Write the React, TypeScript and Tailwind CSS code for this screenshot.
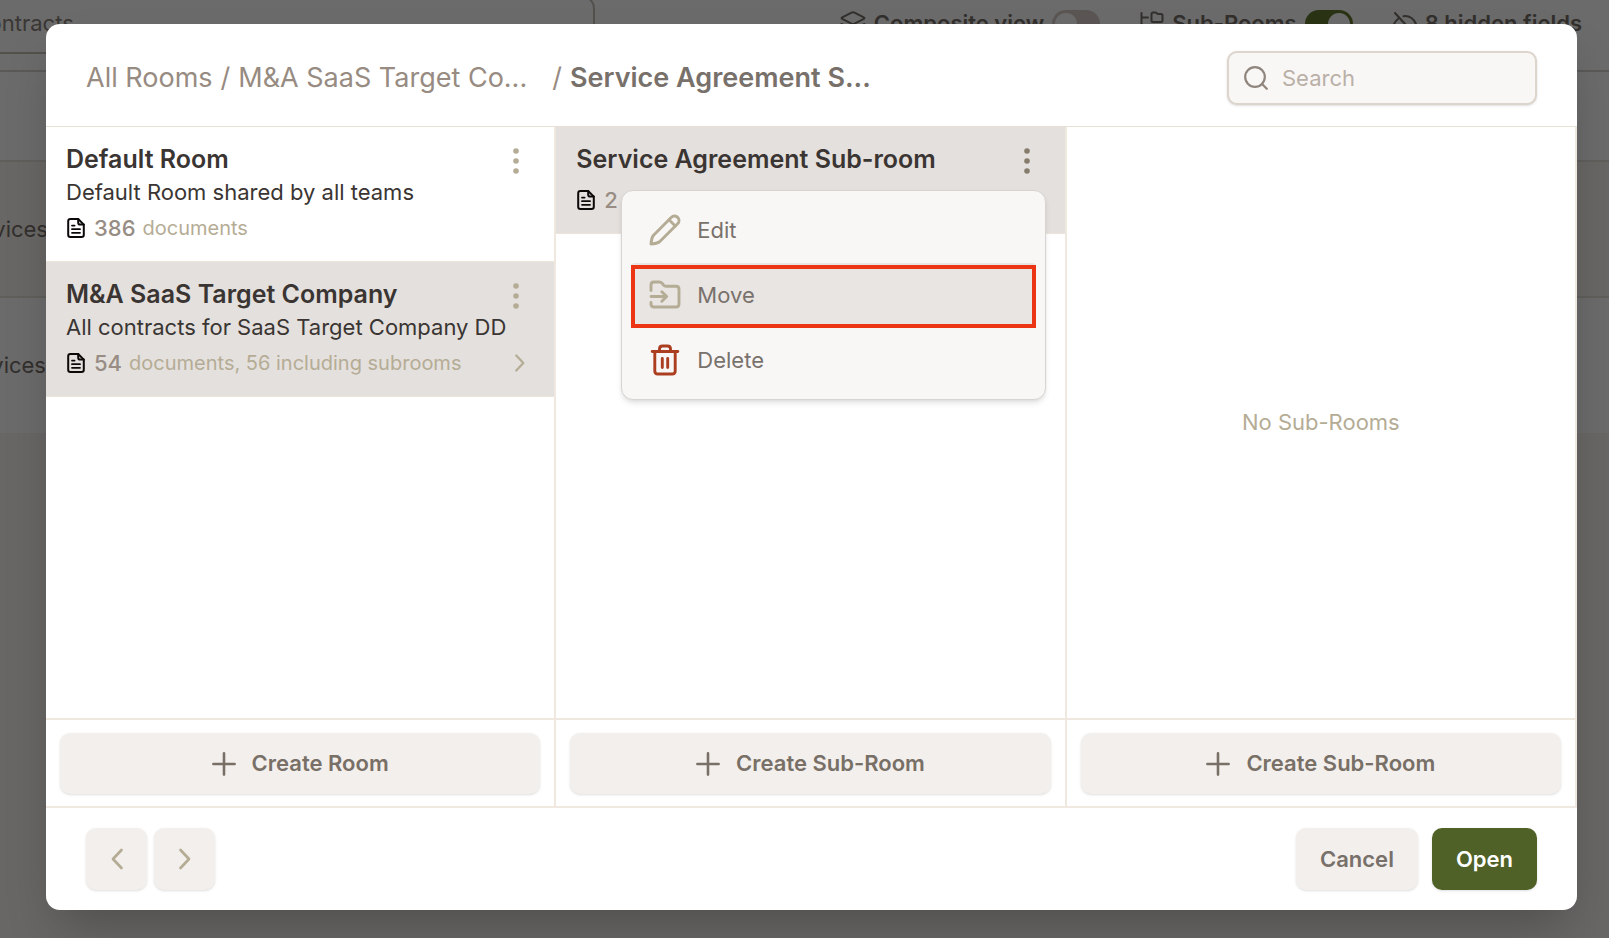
import type { ReactNode } from "react";

function DocumentIcon() {
  return (
    <svg viewBox="0 0 20 22" className="h-[22px] w-5 shrink-0" fill="none" stroke="#0c0a09" strokeWidth="2" strokeLinecap="round" strokeLinejoin="round" aria-hidden="true">
      <path d="M12.2 2H4.4C3 2 2.2 2.8 2.2 4.200v13.600C2.200 19.200 3 20 4.400 20h11.200c1.400 0 2.200-.8 2.200-2.200V7.600z" />
      <path d="M12.200 2v3.400c0 1.400.8 2.200 2.200 2.200h3.400" />
      <path d="M6 8.600h2.600M6 12.200h8M6 15.800h8" strokeWidth="1.800" />
    </svg>
  );
}

function KebabIcon() {
  return (
    <svg viewBox="0 0 6 26" className="h-[26px] w-1.5" fill="currentColor" aria-hidden="true">
      <circle cx="3" cy="3" r="2.800" />
      <circle cx="3" cy="13" r="2.800" />
      <circle cx="3" cy="23" r="2.800" />
    </svg>
  );
}

function Chevron({ left = false, small = false }: { left?: boolean; small?: boolean }) {
  return (
    <svg viewBox="0 0 14 24" className={small ? "h-5 w-3 shrink-0" : "h-6 w-3.5 shrink-0"} fill="none" stroke="#b5ac95" strokeWidth="2.700" strokeLinecap="round" strokeLinejoin="round" aria-hidden="true">
      <path d={left ? "M11.500 3 3 12l8.500 9" : "M2.500 3l8.500 9-8.500 9"} />
    </svg>
  );
}

function PencilIcon() {
  return (
    <svg viewBox="0 0 32 32" className="size-8" fill="none" stroke="#b5ac95" strokeWidth="2.900" strokeLinecap="round" strokeLinejoin="round" aria-hidden="true">
      <path d="M2 30c.2-3.400.9-6.600 2.300-8.600L22.200 3.400c4.300-4.300 10.700 2.100 6.400 6.400L10.600 27.700C8.600 29.100 5.400 29.800 2 30z" />
      <path d="M20 5.800l6.200 6.200" />
    </svg>
  );
}

function MoveIcon() {
  return (
    <svg viewBox="0 0 32 32" className="size-8" fill="none" stroke="#b5ac95" strokeWidth="2.900" strokeLinecap="round" strokeLinejoin="round" aria-hidden="true">
      <path d="M2 11.500V6c0-1.900 1.100-3 3-3h5.200c1.300 0 2.200.4 3 1.400l1.400 1.700c.7.900 1.500 1.200 2.600 1.200H27c1.900 0 3 1.100 3 3V25c0 1.900-1.100 3-3 3H5c-1.900 0-3-1.100-3-3v-1.500" />
      <path d="M2 17.500h15.500M12.800 12.700l4.900 4.800-4.900 4.800" />
    </svg>
  );
}

function TrashIcon() {
  return (
    <svg viewBox="0 0 32 32" className="size-8" fill="none" stroke="#ac3e20" strokeWidth="2.900" strokeLinecap="round" strokeLinejoin="round" aria-hidden="true">
      <path d="M3.200 7.500h25.600M5.800 7.500V27c0 1.900 1.100 3 3 3h14.400c1.900 0 3-1.100 3-3V7.500" />
      <path d="M10.500 7V5c0-1.900 1.100-3 3-3h5c1.900 0 3 1.100 3 3v2" />
      <path d="M13.300 14.500v9M18.700 14.500v9" />
    </svg>
  );
}

function PlusIcon() {
  return (
    <svg viewBox="0 0 24 24" className="size-6" fill="none" stroke="currentColor" strokeWidth="2.600" strokeLinecap="round" aria-hidden="true">
      <path d="M12 1.400v21.200M1.400 12h21.200" />
    </svg>
  );
}

function SearchIcon() {
  return (
    <svg viewBox="0 0 24 24" className="size-6 shrink-0" fill="none" stroke="#8f857c" strokeWidth="2.200" strokeLinecap="round" aria-hidden="true">
      <circle cx="11" cy="11" r="9.800" />
      <path d="M18 18l4.800 4.800" />
    </svg>
  );
}

function LayersIcon() {
  return (
    <svg viewBox="0 0 26 26" className="size-[26px]" fill="none" stroke="currentColor" strokeWidth="2" strokeLinecap="round" strokeLinejoin="round" aria-hidden="true">
      <path d="M11.500 1.600 2.200 6.400c-.8.400-.8 1 0 1.400l9.300 4.800c1 .5 2 .5 3 0l9.300-4.800c.8-.4.8-1 0-1.400l-9.300-4.800c-1-.5-2-.5-3 0z" />
      <path d="M1.500 13l10 5.200c1 .5 2 .5 3 0l10-5.200M1.500 18.500l10 5.200c1 .5 2 .5 3 0l10-5.200" />
    </svg>
  );
}

function TreeIcon() {
  return (
    <svg viewBox="0 0 24 26" className="h-[26px] w-6" fill="none" stroke="currentColor" strokeWidth="2" strokeLinecap="round" strokeLinejoin="round" aria-hidden="true">
      <path d="M1.500 2v17c0 1.500.8 2 2 2H8M1.500 6.500H8" />
      <path d="M11.500 3c0-1 .5-1.500 1.500-1.500h2.500c1 0 1.500 1.500 2.500 1.500h3c1 0 1.500.6 1.500 1.500v5c0 1-.5 1.500-1.500 1.500h-8c-1 0-1.500-.5-1.500-1.500z" />
      <path d="M11.500 17.500c0-1 .5-1.500 1.500-1.500h2.500c1 0 1.500 1.500 2.500 1.500h3c1 0 1.500.6 1.500 1.500v5h-11z" />
    </svg>
  );
}

function HiddenIcon() {
  return (
    <svg viewBox="0 0 24 26" className="h-[26px] w-6" fill="none" stroke="currentColor" strokeWidth="2" strokeLinecap="round" strokeLinejoin="round" aria-hidden="true">
      <path d="M2 2l20 22M10.500 5.200C16 4.500 20.500 7.500 23 13c-.7 1.500-1.500 2.700-2.500 3.700M5.500 7.500C3.500 9 2 11 1 13c2.600 5.600 8 9 14 7" />
    </svg>
  );
}

function Toggle({ label, on = false }: { label: string; on?: boolean }) {
  return (
    <input
      type="checkbox"
      role="switch"
      aria-label={label}
      defaultChecked={on}
      className="h-7 w-12 appearance-none rounded-full bg-[#d9cec8] p-[3px] before:block before:size-[22px] before:rounded-full before:bg-white checked:bg-[#647a30] checked:before:ml-5"
    />
  );
}

function Backdrop() {
  return (
    <div className="absolute inset-0 overflow-hidden bg-[#f9f6f1] text-[22px] text-[#77706a]" aria-hidden="true">
      <header className="flex h-[72px] items-start justify-between border-b-2 border-[#d6d3d1] bg-white pr-[27px]">
        <div className="-mt-1 -ml-[26px] flex h-[58px] w-[621px] items-center rounded-xl border-2 border-[#c9bfb5] pb-1 text-[#8a837c]">
          contracts
        </div>
        <div className="flex items-center gap-10 pt-[7px] font-semibold">
          <div className="flex items-center gap-2">
            <LayersIcon />
            Composite view
            <Toggle label="Composite view" />
          </div>
          <div className="flex items-center gap-2">
            <TreeIcon />
            Sub-Rooms
            <Toggle label="Sub-Rooms" on />
          </div>
          <div className="flex items-center gap-2">
            <HiddenIcon />
            8 hidden fields
          </div>
        </div>
      </header>
      <div className="h-[90px] border-b-2 border-[#e7e2dc] bg-white" />
      <div className="flex h-[136px] items-center border-b-2 border-[#e7e2dc]">
        <span className="flex w-12 justify-end">Services</span>
      </div>
      <div className="flex h-[135px] items-center bg-white">
        <span className="flex w-[46px] justify-end">Services</span>
      </div>
    </div>
  );
}

interface RoomProps {
  name: string;
  description?: string;
  count: number;
  detail?: string;
  selected?: boolean;
  menuOpen?: boolean;
  hasChildren?: boolean;
}

function Room({ name, description, count, detail, selected, menuOpen, hasChildren }: RoomProps) {
  return (
    <article className={`border-b border-[#ece6da] px-5 py-4 ${selected ? "bg-[#e4e0dd]" : "bg-white"}`}>
      <div className="flex items-center justify-between pr-[15px]">
        <h2 className="truncate text-[25px] leading-8 font-semibold text-[#3a3532]">{name}</h2>
        <button type="button" aria-label={`Actions for ${name}`} className={`flex h-8 items-center pt-1 ${menuOpen ? "text-[#857c6c]" : "text-[#b5ac95]"}`}>
          <KebabIcon />
        </button>
      </div>
      {description && <p className="truncate text-[22px] leading-[34px] text-[#3a3532]">{description}</p>}
      <div className={`flex items-center justify-between pr-2 ${description ? "mt-0.5" : "mt-2"}`}>
        <p className="flex h-[34px] items-center text-[20px] text-[#b5ac95]">
          <DocumentIcon />
          <span className="mr-[7px] ml-2 text-[22px] font-medium text-[#978d84]">{count}</span>
          {detail}
        </p>
        {hasChildren && <Chevron small />}
      </div>
    </article>
  );
}

function Column({ action, children }: { action: string; children: ReactNode }) {
  return (
    <section className="flex min-w-0 flex-col border-r-2 border-[#eee8de]">
      <div className="relative flex flex-1 flex-col">{children}</div>
      <div className="border-t-2 border-[#eee8de] px-3.5 pt-[13px] pb-3">
        <button type="button" className="flex h-[61px] w-full items-center justify-center gap-4 rounded-[10px] bg-[#f3efec] text-[22px] font-semibold text-[#786f67] shadow-sm">
          <PlusIcon />
          {action}
        </button>
      </div>
    </section>
  );
}

function MenuItem({ icon, label, active }: { icon: ReactNode; label: string; active?: boolean }) {
  return (
    <button
      type="button"
      role="menuitem"
      className={`relative flex h-16 items-center gap-4 rounded pl-[18px] text-[22px] text-[#78716c] ${active ? "bg-[#e9e5e2]" : ""}`}
    >
      {icon}
      {label}
      {active && <span className="absolute inset-x-0 top-0.5 -bottom-px border-4 border-[#ec3515]" />}
    </button>
  );
}

export default function App() {
  return (
    <div className="relative min-h-screen font-['Inter','Liberation_Sans',sans-serif]">
      <Backdrop />
      <div className="relative flex min-h-screen bg-black/58 pt-6 pr-8 pb-7 pl-[46px]">
        <div role="dialog" aria-modal="true" aria-label="Select room" className="flex min-w-0 flex-1 flex-col rounded-[14px] bg-white shadow-2xl">
          <header className="flex h-[103px] items-center justify-between border-b border-[#e8e1d5] px-10 pt-0.5">
            <nav aria-label="Breadcrumb" className="flex items-center gap-2 pt-1 text-[27px] whitespace-nowrap text-[#978b82]">
              <a href="#all">All Rooms</a>
              <span>/</span>
              <a href="#target" className="w-[306px]">M&amp;A SaaS Target Co...</a>
              <span>/</span>
              <a href="#agreement" className="font-semibold text-[#78706a]">Service Agreement S...</a>
            </nav>
            <label className="mt-1 flex h-[54px] w-[310px] items-center gap-3.5 rounded-[10px] border-2 border-[#ddd4cb] bg-[#f9f7f6] px-[15px] shadow-sm">
              <SearchIcon />
              <input type="search" aria-label="Search rooms" placeholder="Search" className="min-w-0 flex-1 bg-transparent text-[22px] text-[#3a3532] outline-none placeholder:text-[#b9b0a7]" />
            </label>
          </header>

          <div className="grid flex-1 grid-cols-3">
            <Column action="Create Room">
              <Room name="Default Room" description="Default Room shared by all teams" count={386} detail="documents" />
              <Room
                name="M&A SaaS Target Company"
                description="All contracts for SaaS Target Company DD"
                count={54}
                detail="documents, 56 including subrooms"
                selected
                hasChildren
              />
            </Column>
            <Column action="Create Sub-Room">
              <Room name="Service Agreement Sub-room" count={2} selected menuOpen />
              <div role="menu" className="absolute top-[63px] right-[19px] left-[65px] flex flex-col gap-px rounded-xl border border-[#d8d4d1] bg-[#f9f7f6] px-[9px] py-[7px] shadow-md">
                <MenuItem icon={<PencilIcon />} label="Edit" />
                <MenuItem icon={<MoveIcon />} label="Move" active />
                <MenuItem icon={<TrashIcon />} label="Delete" />
              </div>
            </Column>
            <Column action="Create Sub-Room">
              <p className="flex flex-1 items-center justify-center text-[22px] text-[#b5ac95]">No Sub-Rooms</p>
            </Column>
          </div>

          <footer className="flex items-center justify-between border-t-2 border-[#f0e9e2] px-10 py-5 text-[22px] font-semibold">
            <div className="flex gap-[7px]">
              <button type="button" aria-label="Back" className="flex h-[62px] w-[61px] items-center justify-center rounded-[10px] bg-[#f3efec] shadow-sm">
                <Chevron left />
              </button>
              <button type="button" aria-label="Forward" className="flex h-[62px] w-[61px] items-center justify-center rounded-[10px] bg-[#f3efec] shadow-sm">
                <Chevron />
              </button>
            </div>
            <div className="flex gap-3.5">
              <button type="button" className="h-[62px] rounded-[10px] bg-[#f3efec] px-6 text-[#78706a] shadow-sm">Cancel</button>
              <button type="button" className="h-[62px] rounded-[10px] bg-[#506127] px-6 text-white shadow-sm">Open</button>
            </div>
          </footer>
        </div>
      </div>
    </div>
  );
}
